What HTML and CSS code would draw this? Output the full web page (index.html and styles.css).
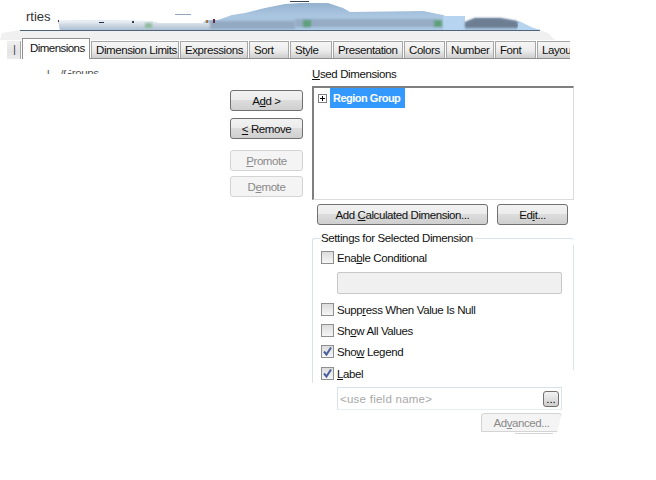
FILE: index.html
```html
<!DOCTYPE html>
<html lang="en">
<head>
<meta charset="utf-8">
<title>Properties</title>
<link rel="stylesheet" href="styles.css">
</head>
<body>
<div class="page">
  <header class="titlebar">
    <svg class="torn" width="656" height="40" viewBox="0 0 656 40" aria-hidden="true">
      <defs>
        <linearGradient id="sky" x1="0" y1="0" x2="0" y2="1">
          <stop offset="0" stop-color="#94b1ce"/>
          <stop offset="0.45" stop-color="#a9c5e0"/>
          <stop offset="1" stop-color="#acc8e3"/>
        </linearGradient>
        <linearGradient id="fade" x1="0" y1="0" x2="0" y2="1">
          <stop offset="0" stop-color="#f3f6f9"/>
          <stop offset="0.6" stop-color="#c6d2de"/>
          <stop offset="1" stop-color="#aebfd2"/>
        </linearGradient>
        <filter id="soft" x="-30%" y="-60%" width="160%" height="220%"><feGaussianBlur stdDeviation="1.3"/></filter>
      </defs>
      <path d="M58 20 L150 21 L158 23 L203 23 L206 20 L218 20 L232 15 L245 13 L265 8 L285 4 L300 3 L328 3 L343 8 L350 12 L423 11 L443 15 L457 21 L465 22 L475 18 L500 18 L517 21 L533 28 L540 30 L60 30 Z" fill="url(#sky)"/>
      <path d="M58 20 L150 21 L158 23 L215 23 L215 30 L60 30 Z" fill="url(#fade)"/>
      <rect x="210" y="21" width="85" height="8" fill="#93a9c2" filter="url(#soft)"/>
      <rect x="295" y="19" width="140" height="8" fill="#96acc5" filter="url(#soft)"/>
      <rect x="443" y="16" width="22" height="14" fill="#b6d3ef"/>
      <path d="M465 22 L475 18 L500 18 L517 21 L519 28 L465 28 Z" fill="#6d7e93" filter="url(#soft)"/>
      <path d="M519 21 L533 28 L540 30 L517 30 Z" fill="#b6d3ef"/>
      <rect x="434" y="20" width="8" height="7" fill="#5f9f7c" filter="url(#soft)"/>
      <rect x="303" y="20" width="8" height="7" fill="#5f9f7c" filter="url(#soft)"/>
      <rect x="145" y="23" width="7" height="5" fill="#8fbb9e" filter="url(#soft)"/>
      <rect x="290" y="1" width="19" height="1" fill="#3a4652"/>
      <rect x="175" y="14" width="16" height="1" fill="#8ea6bf"/>
      <rect x="58" y="20" width="1" height="2" fill="#6a2a3a"/>
      <rect x="99" y="22" width="5" height="1" fill="#24324f"/>
      <rect x="132" y="21" width="2" height="2" fill="#34404f"/>
      <rect x="206" y="20" width="2" height="3" fill="#a8743c"/>
      <rect x="213" y="19" width="2" height="4" fill="#6a2a3a"/>
      <path d="M20 30 H540 L548 33 L555 40 H0 L2 33 Z" fill="#f0f0f0"/>
      <rect x="20" y="30" width="520" height="1" fill="#4f6379"/>
    </svg>
    <span class="caption">rties</span>
  </header>

  <nav class="tabs">
    <span class="tab tab-clip">|</span>
    <span class="tab active">Dimensions</span>
    <span class="tab w-limits">Dimension Limits</span>
    <span class="tab w-expr">Expressions</span>
    <span class="tab w-sort">Sort</span>
    <span class="tab w-style">Style</span>
    <span class="tab w-pres">Presentation</span>
    <span class="tab w-colors">Colors</span>
    <span class="tab w-num">Number</span>
    <span class="tab w-font">Font</span>
    <span class="tab w-layout">Layou</span>
  </nav>

  <main class="content">
    <section class="left">
      <div class="faded">l &nbsp;&nbsp;&nbsp;/Groups</div>
    </section>

    <section class="actions">
      <button class="btn"><span>A<u>d</u>d &gt;</span></button>
      <button class="btn"><span><u>&lt;</u> Remove</span></button>
      <button class="btn off gap-top"><span><u>P</u>romote</span></button>
      <button class="btn off gap-small"><span>D<u>e</u>mote</span></button>
    </section>

    <section class="right">
      <div class="label"><u>U</u>sed Dimensions</div>
      <div class="listbox">
        <div class="row">
          <span class="expander"></span>
          <span class="selected">Region Group</span>
        </div>
      </div>
      <div class="calc-row">
        <button class="btn wide"><span>Add <u>C</u>alculated Dimension...</span></button>
        <button class="btn edit"><span>Ed<u>i</u>t...</span></button>
      </div>
      <fieldset class="settings">
        <legend>Settings for Selected Dimension</legend>
        <label class="check first"><span class="box"></span><span>Ena<u>b</u>le Conditional</span></label>
        <div class="field disabled"></div>
        <label class="check"><span class="box"></span><span>Supp<u>r</u>ess When Value Is Null</span></label>
        <label class="check"><span class="box"></span><span>Sh<u>o</u>w All Values</span></label>
        <label class="check"><span class="box"><svg width="11" height="11" viewBox="0 0 11 11"><path d="M2 5.5 L4.5 8.5 L9 1.5" fill="none" stroke="#4a5f9e" stroke-width="2"/></svg></span><span>Sho<u>w</u> Legend</span></label>
        <label class="check tall"><span class="box"><svg width="11" height="11" viewBox="0 0 11 11"><path d="M2 5.5 L4.5 8.5 L9 1.5" fill="none" stroke="#4a5f9e" stroke-width="2"/></svg></span><span><u>L</u>abel</span></label>
      </fieldset>
      <div class="name-field">
        <span class="placeholder">&lt;use field name&gt;</span>
        <button class="dots">...</button>
      </div>
      <div class="adv-row">
        <button class="btn off adv"><span>Ad<u>v</u>anced...</span></button>
      </div>
      <div class="adv-edge"></div>
    </section>
  </main>
</div>
</body>
</html>
```

FILE: styles.css
```css
* { box-sizing: border-box; }
html, body { margin: 0; background: #fff; }
body { font-family: "Liberation Sans", Arial, sans-serif; font-size: 11.5px; letter-spacing: -0.38px; color: #111; }
.page { width: 656px; height: 480px; overflow: hidden; position: relative; }

.titlebar { height: 40px; position: relative; }
.torn { position: absolute; left: 0; top: 0; display: block; }
.caption { position: absolute; left: 26px; top: 9px; font-size: 13px; letter-spacing: 0; color: #333; }

.tabs { display: flex; height: 19px; align-items: flex-end; position: relative; gap: 1px; }
.tabs::after { content: ""; position: absolute; left: 22px; width: 548px; bottom: 0; height: 1px; background: #8f8f8f; }
.tab {
  height: 18px; line-height: 17px; padding-left: 4px; letter-spacing: -0.42px;
  background: linear-gradient(#f6f6f6, #ececec 50%, #c9c9c9);
  border: 1px solid #a6a6a6; border-bottom: 0; white-space: nowrap; overflow: hidden;
}
.tab-clip { width: 14px; margin-left: 7px; padding-left: 6px; border-left: 0; border-top: 0; color: #445; background: linear-gradient(#f0f0f0, #e4e4e4 60%, #ececec); }
.tab.active { width: 68px; height: 21px; line-height: 18px; background: #fff; z-index: 1; padding-left: 7px; border-color: #8f8f8f; letter-spacing: -0.55px; }
.w-limits { width: 88px; }
.w-expr { width: 68px; }
.w-sort { width: 40px; }
.w-style { width: 42px; }
.w-pres { width: 70px; }
.w-colors { width: 41px; }
.w-num { width: 48px; }
.w-font { width: 41px; }
.w-layout { width: 33px; border-right: 0; }

.content { display: flex; }
.left { width: 230px; padding: 11px 0 0 47px; }
.faded { height: 4px; overflow: hidden; line-height: 7px; color: #555; white-space: nowrap; }
.actions { width: 73px; padding-top: 31px; display: flex; flex-direction: column; gap: 7px; }
.right { width: 262px; margin-left: 9px; padding-top: 8px; }

.btn {
  font: inherit; letter-spacing: -0.42px; color: #111; height: 21px; width: 73px; padding: 0; flex: none;
  border: 1px solid #707070; border-radius: 3px;
  background: linear-gradient(#f2f2f2, #ebebeb 50%, #dcdcdc 50%, #cfcfcf);
}
.btn.off { border-color: #d4d4d4; background: #f4f4f4; color: #8a8a8a; }
.gap-top { margin-top: 4px; }
.gap-small { margin-top: -2px; }

.label { height: 15px; line-height: 14px; }
.listbox { height: 114px; margin-top: 4px; border: 1px solid #dcdcdc; border-top: 2px solid #7f7f7f; border-left: 2px solid #7f7f7f; padding: 0 0 0 4px; }
.row { display: flex; align-items: center; gap: 3px; }
.expander { width: 9px; height: 9px; border: 1px solid #808080; background: linear-gradient(#000,#000) center/5px 1px no-repeat, linear-gradient(#000,#000) center/1px 5px no-repeat, #fff; }
.selected { background: #3399ff; color: #fff; height: 20px; width: 75px; line-height: 20px; padding-left: 3px; font-weight: bold; font-size: 11px; letter-spacing: -0.5px; white-space: nowrap; overflow: hidden; }

.calc-row { display: flex; gap: 9px; margin: 4px 0 0 5px; }
.wide { width: 171px; }
.edit { width: 71px; }

.settings { position: relative; margin: 7px 0 0 0; width: 262px; height: 151px; border: 0; border-top: 1px solid #d8e2ea; border-left: 1px solid #d8e2ea; border-radius: 3px 3px 0 0; padding: 0 0 0 8px; min-inline-size: 0; }
.settings::after { content: ""; position: absolute; right: 0; top: 0; height: 125px; width: 1px; background: #d8e2ea; }
legend { padding: 0 2px 0 0; margin-left: 0; line-height: 13px; height: 13px; }
.check { display: flex; align-items: center; gap: 3px; height: 15px; margin-top: 6px; }
.check.first { margin-top: 5px; }
.check.tall { margin-top: 7px; }
.box { width: 13px; height: 13px; border: 1px solid #8e8f8f; background: linear-gradient(#dcdcdc, #f6f6f6); display: flex; align-items: center; justify-content: center; flex: none; }
.field { height: 22px; margin: 7px 12px 8px 16px; }
.disabled { background: #f0f0f0; border: 1px solid #c8c8c8; border-radius: 2px; }

.name-field { margin: 4px 12px 0 25px; height: 23px; border-top: 1px solid #d8e2ea; border-left: 1px solid #d8e2ea; border-right: 1px solid #d8e2ea; border-bottom: 1px solid #e6eef2; display: flex; align-items: center; justify-content: space-between; padding: 0 2px 0 2px; }
.placeholder { color: #a8a8a8; letter-spacing: .25px; }
.dots { width: 16px; height: 16px; padding: 0; font: inherit; line-height: 10px; border: 1px solid #707070; border-radius: 3px; background: linear-gradient(#f2f2f2, #cfcfcf); }
.adv-row { display: flex; justify-content: flex-end; padding: 3px 12px 0 0; }
.adv { width: 81px; height: 19px; border-bottom-color: #f4f4f4; border-radius: 3px 3px 0 0; clip-path: polygon(0 0, 100% 0, 94% 100%, 0 100%); }
.adv-edge { width: 38px; height: 1px; margin: 1px 0 0 203px; background: #d4d4d4; }
```
